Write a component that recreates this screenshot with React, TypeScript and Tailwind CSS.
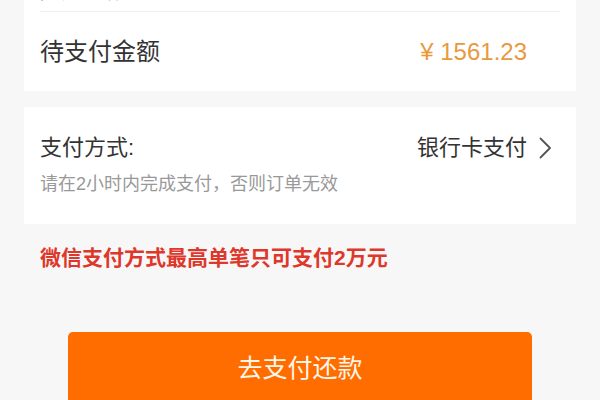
import React from "react";

const font = { fontFamily: '"Liberation Sans", "Noto Sans CJK SC", sans-serif' };

export default function App() {
  return (
    <div
      className="w-[600px] h-[400px] overflow-hidden bg-[#f7f7f7] px-[24px]"
      style={font}
    >
      <div className="bg-white px-[16px]">
        <div className="mt-[-30px] h-[42px] flex items-center border-b border-[#eeeeee] text-[22px] leading-none">
          <span className="text-[#333333]">应还金额</span>
          <span className="ml-[30px] text-[#f3b36a]">¥ 1561.23</span>
        </div>
        <div className="h-[79px] flex items-center justify-between">
          <span className="text-[24px] text-[#333333] leading-none">待支付金额</span>
          <span className="text-[24px] text-[#e9993d] leading-none mr-[33px]">¥ 1561.23</span>
        </div>
      </div>

      <div className="mt-[16px] bg-white px-[16px] pt-[28px] pb-[28px]">
        <div className="flex items-center justify-between h-[26px]">
          <span className="text-[22px] text-[#333333] leading-none">支付方式:</span>
          <span className="flex items-center gap-[12px] text-[22px] text-[#333333] leading-none mr-[8px]">
            银行卡支付
            <svg width="13" height="22" viewBox="0 0 13 22" fill="none">
              <polyline points="1.5,1.5 11,11 1.5,20.5" stroke="#555555" strokeWidth="1.8" strokeLinecap="round" strokeLinejoin="round" />
            </svg>
          </span>
        </div>
        <div className="mt-[11px] h-[24px] flex items-center text-[18px] text-[#999999] leading-none">
          请在2小时内完成支付，否则订单无效
        </div>
      </div>

      <div className="mt-[19px] px-[16px] h-[28px] flex items-center text-[21px] font-bold text-[#de372b] leading-none">
        微信支付方式最高单笔只可支付2万元
      </div>

      <div className="mt-[61px] mx-[44px] h-[72px] rounded-[5px] bg-[#ff6d00] flex items-center justify-center text-[25px] text-[#fff6ea] leading-none">
        去支付还款
      </div>
    </div>
  );
}
